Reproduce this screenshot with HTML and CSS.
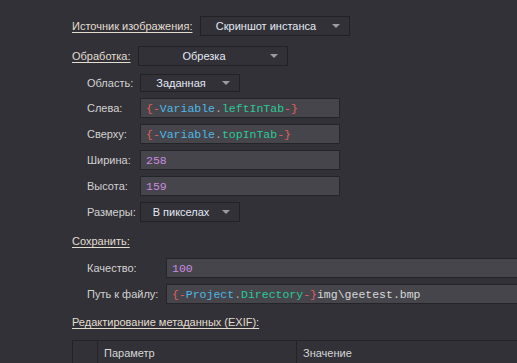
FILE: index.html
```html
<!DOCTYPE html>
<html lang="ru">
<head>
  <meta charset="UTF-8" />
  <title>Скриншот</title>
  <link rel="stylesheet" href="styles.css">
</head>
<body>
  <div class="panel">
    <div class="row row-source">
      <span class="section w-source">Источник изображения:</span>
      <div class="combo wide">Скриншот инстанса</div>
    </div>

    <div class="row row-proc">
      <span class="section w-proc">Обработка:</span>
      <div class="combo wide">Обрезка</div>
    </div>

    <div class="group">
      <div class="row row-area">
        <span class="label w-short">Область:</span>
        <div class="combo small">Заданная</div>
      </div>
      <div class="row row-field">
        <span class="label w-short">Слева:</span>
        <div class="input mid"><span class="c-br">{-</span><span class="c-obj">Variable</span><span class="c-dot">.</span><span class="c-prop">leftInTab</span><span class="c-br">-}</span></div>
      </div>
      <div class="row row-field">
        <span class="label w-short">Сверху:</span>
        <div class="input mid"><span class="c-br">{-</span><span class="c-obj">Variable</span><span class="c-dot">.</span><span class="c-prop">topInTab</span><span class="c-br">-}</span></div>
      </div>
      <div class="row row-field">
        <span class="label w-short">Ширина:</span>
        <div class="input mid"><span class="c-num">258</span></div>
      </div>
      <div class="row row-field">
        <span class="label w-short">Высота:</span>
        <div class="input mid"><span class="c-num">159</span></div>
      </div>
      <div class="row row-field">
        <span class="label w-short">Размеры:</span>
        <div class="combo small">В пикселах</div>
      </div>
    </div>

    <div class="row row-save">
      <span class="section">Сохранить:</span>
    </div>

    <div class="group">
      <div class="row row-quality">
        <span class="label w-long">Качество:</span>
        <div class="input long"><span class="c-num">100</span></div>
      </div>
      <div class="row row-field">
        <span class="label w-long">Путь к файлу:</span>
        <div class="input long"><span class="c-br">{-</span><span class="c-obj">Project</span><span class="c-dot">.</span><span class="c-prop">Directory</span><span class="c-br">-}</span><span class="c-plain">img\geetest.bmp</span></div>
      </div>
    </div>

    <div class="row row-exif">
      <span class="section">Редактирование метаданных (EXIF):</span>
    </div>

    <div class="table">
      <div class="cell c-index"></div>
      <div class="cell c-param">Параметр</div>
      <div class="cell c-value">Значение</div>
    </div>
  </div>
</body>
</html>
```

FILE: styles.css
```css
body {
  margin: 0;
  background: #323137;
  font-family: "Liberation Sans", Arial, sans-serif;
  font-size: 11px;
  color: #d4d4d4;
  overflow: hidden;
  height: 363px;
}

.panel {
  box-sizing: border-box;
  width: 517px;
  height: 363px;
  overflow: hidden;
  padding: 16px 0 0 72px;
}

.row {
  display: flex;
  align-items: center;
  height: 20px;
  margin-top: 6px;
}

.row-source {
  margin-top: 0;
}

.row-proc {
  margin-top: 10px;
}

.row-area {
  margin-top: 8px;
  height: 18px;
}

.row-save {
  margin-top: 9px;
}

.row-quality {
  margin-top: 7px;
}

.row-exif {
  margin-top: 8px;
}

.group {
  padding-left: 15px;
}

.section {
  color: #e2ddcf;
  text-decoration: underline;
  text-underline-offset: 2px;
  white-space: nowrap;
  flex-shrink: 0;
}

.w-source { width: 128px; }
.w-proc { width: 66px; }

.label {
  white-space: nowrap;
  color: #d2d2d2;
  flex-shrink: 0;
}

.w-short { width: 53px; }
.w-long { width: 79px; }

.combo {
  position: relative;
  box-sizing: border-box;
  height: 100%;
  border: 1px solid #222125;
  background: #323137;
  color: #e3eaf6;
  display: flex;
  align-items: center;
  justify-content: center;
  padding-right: 18px;
  flex-shrink: 0;
}

.combo::after {
  content: "";
  position: absolute;
  right: 9px;
  top: 50%;
  margin-top: -2px;
  border-left: 4px solid transparent;
  border-right: 4px solid transparent;
  border-top: 4px solid #9b9ba0;
}

.combo.wide { width: 150px; }
.combo.small { width: 100px; }

.input {
  box-sizing: border-box;
  height: 100%;
  border: 1px solid #252428;
  background: #46454b;
  padding-left: 5px;
  display: flex;
  align-items: center;
  font-family: "Liberation Mono", "DejaVu Sans Mono", monospace;
  font-size: 11.5px;
  white-space: nowrap;
  flex-shrink: 0;
}

.input.mid { width: 200px; }
.input.long { flex: 1; border-right: none; }

.c-br { color: #e0605f; }
.c-obj { color: #4cb9e6; }
.c-dot { color: #a9a9a9; }
.c-prop { color: #2bc999; }
.c-num { color: #c98ce0; }
.c-plain { color: #d8d8d8; }

.table {
  margin-top: 8px;
  display: flex;
  height: 40px;
  border-top: 1px solid #242327;
  border-left: 1px solid #242327;
}

.cell {
  box-sizing: border-box;
  height: 24px;
  display: flex;
  align-items: center;
  padding-left: 6px;
  color: #d6d6d6;
  border-right: 1px solid #242327;
  flex-shrink: 0;
}

.c-index { width: 25px; }
.c-param { width: 199px; }
.c-value { flex: 1; border-right: none; }
```
